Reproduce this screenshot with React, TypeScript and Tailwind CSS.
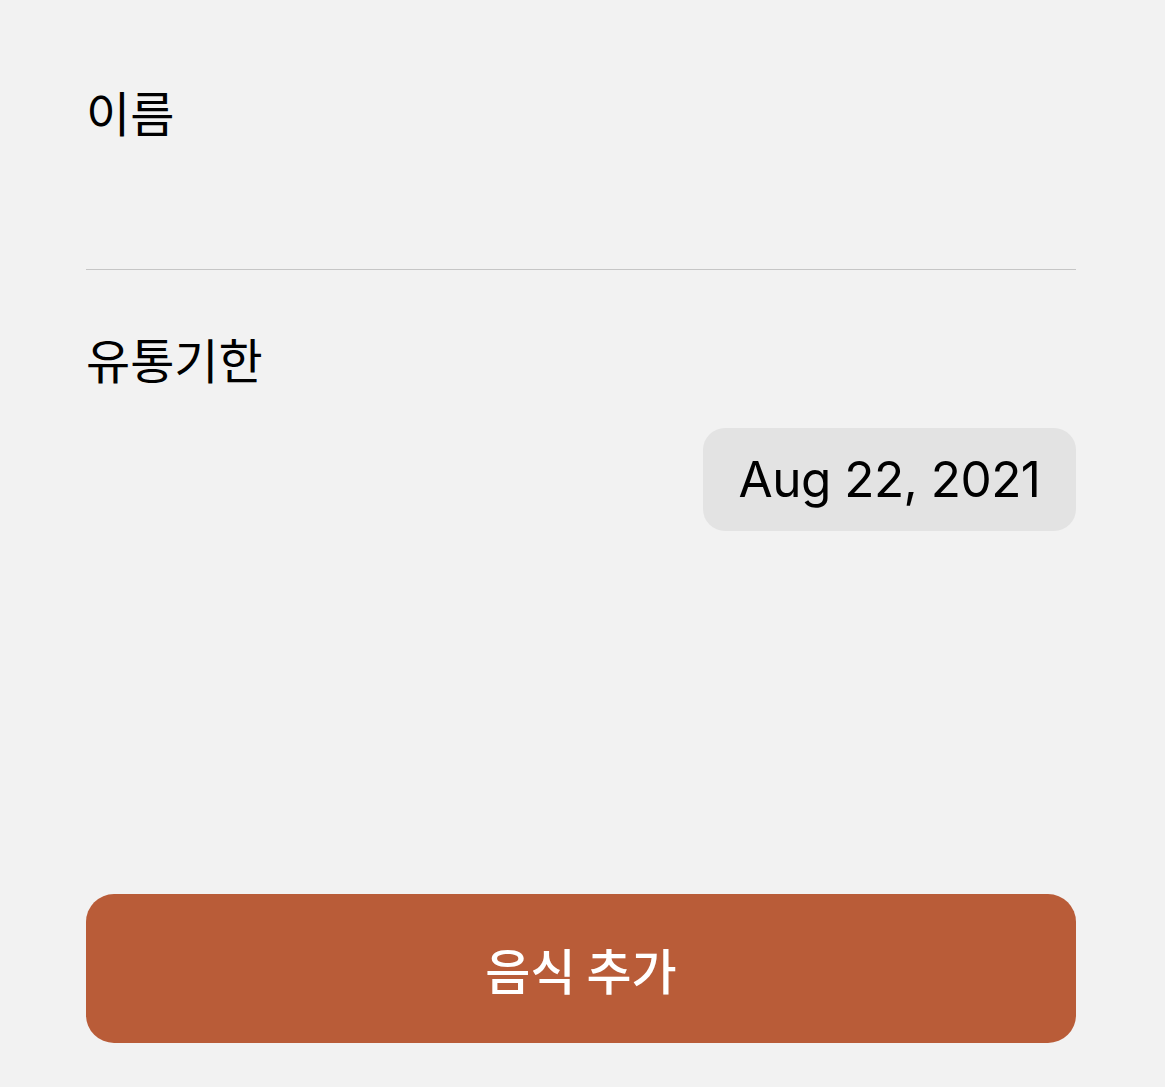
import React from "react";

const kr = { fontFamily: '"Noto Sans CJK KR", "Noto Sans", sans-serif' };

const FieldLabel: React.FC<{ text: string; className?: string }> = ({ text, className }) => (
  <div className={`text-[48px] leading-[48px] text-black ${className ?? ""}`} style={kr}>
    {text}
  </div>
);

export default function App() {
  return (
    <div className="min-h-[1087px] w-full bg-[#f2f2f2] pl-[86px] pr-[89px] pt-[87px]">
      <FieldLabel text="이름" />
      <div className="mt-[134px] h-px bg-[#c6c6c6]" />
      <FieldLabel text="유통기한" className="mt-[64px]" />
      <div className="mt-[46px] flex justify-end">
        <div className="flex h-[103px] w-[373px] items-center justify-center rounded-[22px] bg-[#e3e3e3] font-['Inter',sans-serif] text-[49.5px] tracking-[-0.5px] text-black">
          Aug 22, 2021
        </div>
      </div>
      <button
        className="mt-[363px] flex h-[149px] w-full items-center justify-center rounded-[28px] bg-[#b95c38] text-[49px] font-medium text-white"
        style={kr}
      >
        음식 추가
      </button>
    </div>
  );
}
